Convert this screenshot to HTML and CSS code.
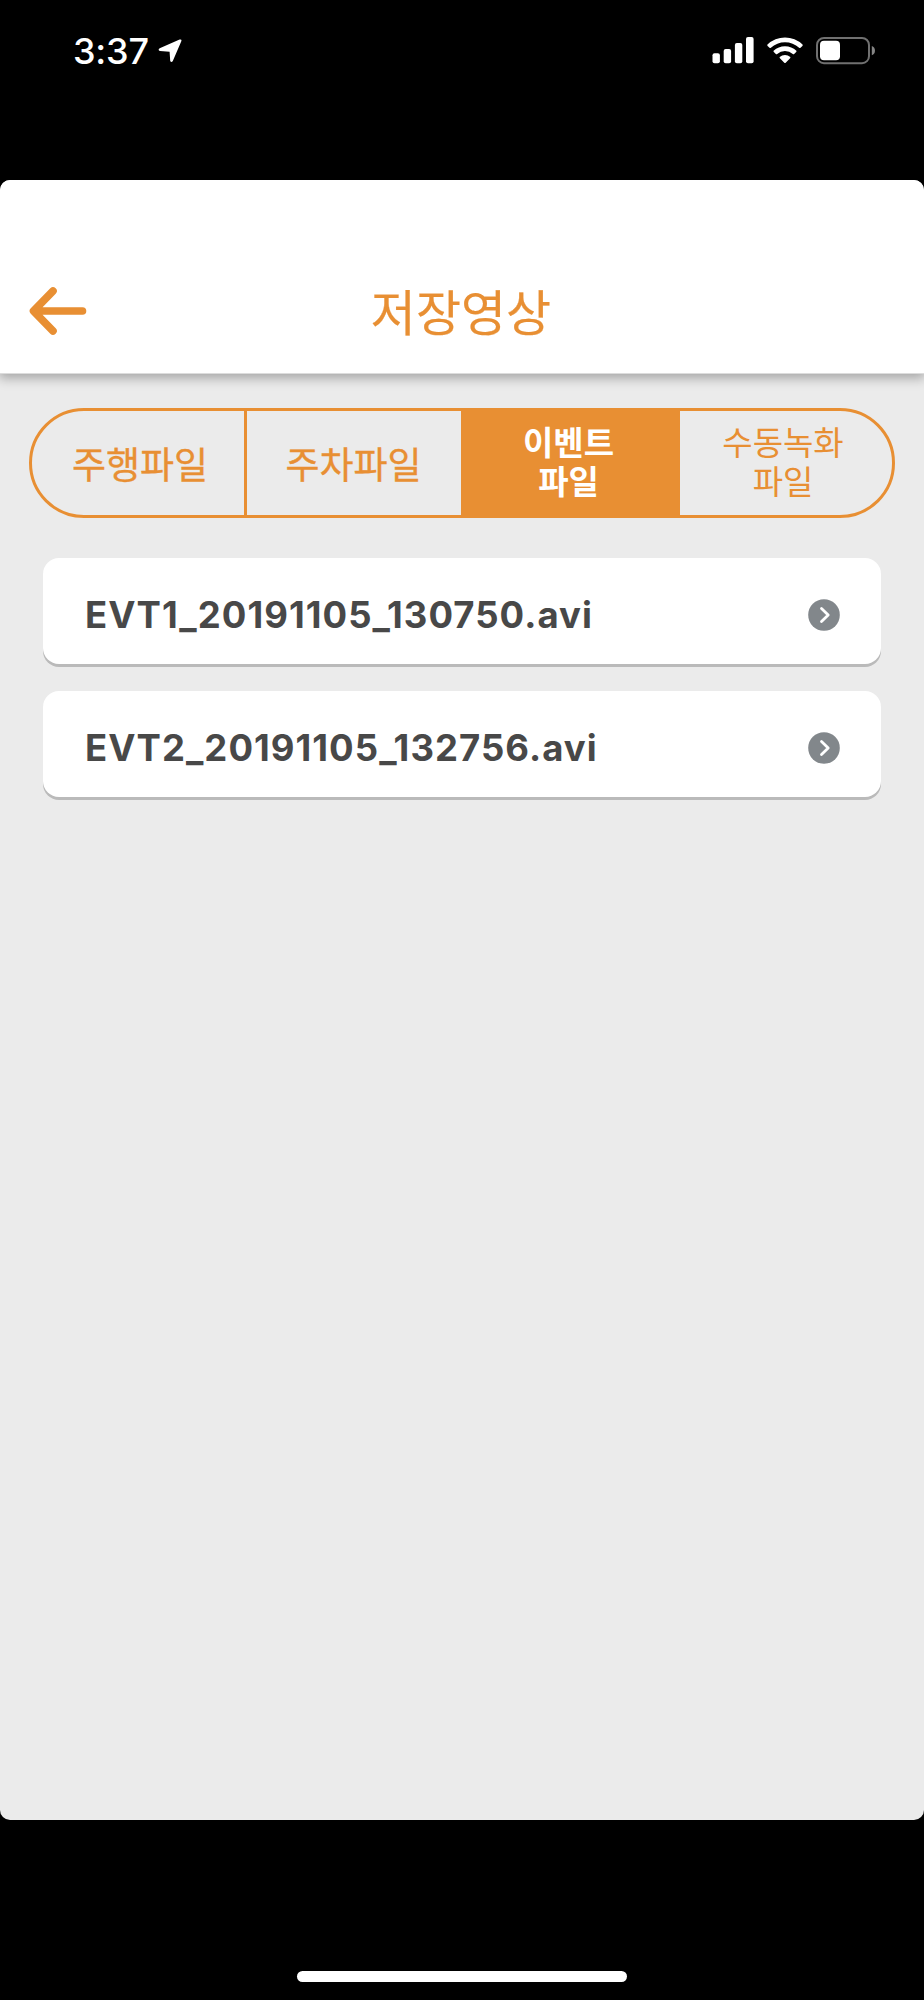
FILE: index.html
```html
<!DOCTYPE html>
<html lang="ko">
<head>
<meta charset="utf-8">
<title>저장영상</title>
<link rel="stylesheet" href="styles.css">
</head>
<body>
<div class="phone">
  <div class="status">
    <span class="time">3:37</span>
    <svg class="location" width="24" height="24" viewBox="0 0 24 24"><path d="M1.7 9.3 21.6 .6Q24.2-.1 23.2 2.5L14.7 22.3Q13 24.2 12.2 21.7L11.6 12.7 2 11.9Q-.6 11.2 1.7 9.3Z" fill="#fff"/></svg>
    <svg class="signal" width="42" height="27" viewBox="0 0 42 27" fill="#fff"><rect x=".5" y="16.3" width="7.4" height="10" rx="2"/><rect x="11.7" y="12" width="7.4" height="14.3" rx="2"/><rect x="22.9" y="6" width="7.4" height="20.3" rx="2"/><rect x="34" y="0" width="7.6" height="26.3" rx="2"/></svg>
    <svg class="wifi" width="36" height="27" viewBox="0 0 36 27" fill="#fff"><path d="M.5 7.6A25 25 0 0 1 35.5 7.6Q36 8.3 35.4 8.9L33.2 11Q32.7 11.3 32.1 10.8A20.5 20.5 0 0 0 3.9 10.8Q3.3 11.3 2.8 11L.6 8.9Q0 8.3 .5 7.6Z"/><path d="M6.6 13.7A16.6 16.6 0 0 1 29.4 13.7Q29.8 14.3 29.2 15L26.9 17.2Q26.4 17.5 25.8 17A11.4 11.4 0 0 0 10.2 17Q9.6 17.5 9.1 17.2L6.8 15Q6.2 14.3 6.6 13.7Z"/><path d="M12.7 20A8.2 8.2 0 0 1 23.3 20Q23.7 20.6 23.1 21.2L18.7 25.7Q18 26.4 17.3 25.7L12.9 21.2Q12.3 20.6 12.7 20Z"/></svg>
    <svg class="battery" width="60" height="28" viewBox="0 0 60 28"><rect x="1" y="1" width="52" height="25.2" rx="7" fill="none" stroke="#707070" stroke-width="2"/><rect x="4" y="3.8" width="20" height="19.4" rx="4" fill="#fff"/><path d="M55.8 9Q59 10.3 59 13.7T55.8 18.3Z" fill="#858585"/></svg>
  </div>
  <main class="app">
    <header class="header">
      <svg class="back" width="58" height="50" viewBox="0 0 58 50" fill="none" stroke="#e88f33" stroke-width="7.6" stroke-linecap="round" stroke-linejoin="round"><path d="M24 5 4.5 25 24 45M6 25H53.5"/></svg>
      <h1 class="title">저장영상</h1>
    </header>
    <nav class="tabs">
      <div class="tab first"><span>주행파일</span></div>
      <div class="tab second"><span>주차파일</span></div>
      <div class="tab active"><span>이벤트<br>파일</span></div>
      <div class="tab last"><span>수동녹화<br>파일</span></div>
    </nav>
    <section class="files">
      <article class="file"><span>EVT1_20191105_130750.avi</span><svg width="32" height="32" viewBox="0 0 32 32"><circle cx="16" cy="16" r="15.8" fill="#82878b"/><path d="M13.5 9.5 20.2 16 13.5 22.5" fill="none" stroke="#fff" stroke-width="2.8" stroke-linecap="round" stroke-linejoin="round"/></svg></article>
      <article class="file"><span>EVT2_20191105_132756.avi</span><svg width="32" height="32" viewBox="0 0 32 32"><circle cx="16" cy="16" r="15.8" fill="#82878b"/><path d="M13.5 9.5 20.2 16 13.5 22.5" fill="none" stroke="#fff" stroke-width="2.8" stroke-linecap="round" stroke-linejoin="round"/></svg></article>
    </section>
  </main>
  <div class="home"></div>
</div>
</body>
</html>
```
FILE: styles.css
```css
* { box-sizing: border-box; }
body { margin: 0; background: #000; font-family: "Inter", "Noto Sans CJK KR", sans-serif; }
.phone { width: 924px; height: 2000px; display: flex; flex-direction: column; overflow: hidden; }
.status { height: 180px; display: flex; align-items: flex-start; padding: 37px 48px 0 73px; }
.time { width: 85px; color: #fff; font-size: 36px; line-height: 28px; font-weight: 500; letter-spacing: -0.2px; white-space: nowrap; }
.location { margin-top: 2px; margin-right: auto; }
.wifi { margin: 0 13px; }
.app { height: 1640px; background: #ebebeb; border-radius: 10px; overflow: hidden; }
.header { height: 194px; background: #fff; border-bottom: 1px solid #dcdcdc; display: grid; grid-template-columns: 58px 1fr 58px; padding: 106px 29px 0; box-shadow: 0 3px 11px 1px rgba(0, 0, 0, .31); }
.title { margin: 0; padding-right: 2px; text-align: center; color: #e88f33; font: 400 49px/47px "Noto Sans CJK KR", sans-serif; -webkit-text-stroke: .2px #e88f33; }
.tabs { width: 866px; height: 110px; margin: 34px 0 0 29px; display: grid; grid-template-columns: 212px 217px 219px 1fr; border: 3px solid #e88f33; border-radius: 55px; overflow: hidden; color: #e88f33; font: 400 37px/40px "Noto Sans CJK KR", sans-serif; }
.tab { display: flex; align-items: center; justify-content: center; text-align: center; white-space: nowrap; }
.first, .second { padding-bottom: 1px; -webkit-text-stroke: .35px #e88f33; }
.first { padding-left: 4px; }
.second { border-left: 3.5px solid #e88f33; padding-right: 1px; }
.active { background: #e88f33; color: #fff; font-weight: 700; padding-right: 4px; }
.active, .last { font-size: 33px; line-height: 39px; padding-bottom: 4px; }
.last { padding-right: 6px; }
.files { display: flex; flex-direction: column; gap: 27px; padding: 40px 43px 0; }
.file { height: 106px; display: flex; align-items: center; justify-content: space-between; padding: 7px 41px 0 42px; background: #fff; border-radius: 16px; box-shadow: 0 3px 0 #bababa; color: #484848; font-size: 36.5px; line-height: 44px; font-weight: 700; letter-spacing: 1.04px; white-space: nowrap; }
.home { width: 330px; height: 11px; margin: 151px 0 0 297px; border-radius: 6px; background: #fff; }
```
